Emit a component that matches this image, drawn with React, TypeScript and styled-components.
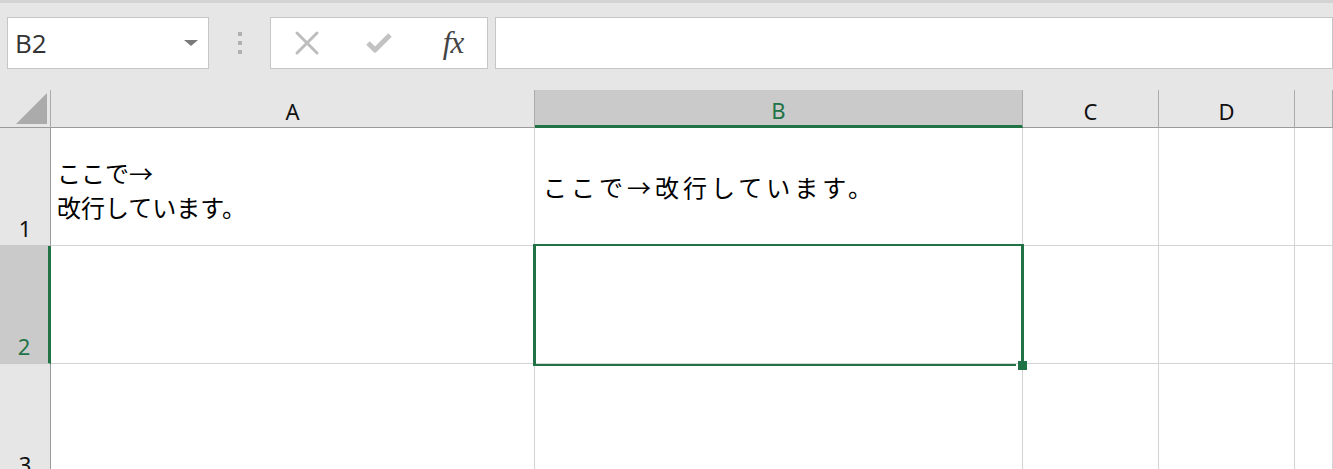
import React from "react";
import styled, { createGlobalStyle } from "styled-components";

const GREEN = "#217346";
const CJK = `"Noto Sans CJK JP", "Noto Sans", sans-serif`;
const UI = `"Noto Sans", "Open Sans", sans-serif`;

const Global = createGlobalStyle`
  html, body { margin: 0; padding: 0; background: #e6e6e6; overflow: hidden; }
  body { width: 1333px; height: 469px; }
  * { box-sizing: border-box; }
`;

const Page = styled.div`
  display: flex;
  flex-direction: column;
  width: 1333px;
  height: 469px;
  overflow: hidden;
  background: #e6e6e6;
  & > * { flex: none; }
`;

const TopStrip = styled.div`
  height: 3px;
  background: #d4d4d4;
`;

const FormulaBar = styled.div`
  display: flex;
  align-items: center;
  height: 87px;
  padding: 14px 0 21px 7px;
`;

const Box = styled.div<{ $w?: number }>`
  display: flex;
  align-items: center;
  height: 52px;
  background: #fff;
  border: 1px solid #c6c6c6;
  ${(p) => (p.$w ? `width: ${p.$w}px; flex: none;` : "flex: 1;")}
`;

const NameText = styled.span`
  flex: 1;
  padding-left: 7px;
  font-family: "Segoe UI", "Open Sans", sans-serif;
  font-size: 26px;
  color: #333;
`;

const Caret = styled.span`
  width: 0;
  height: 0;
  margin-right: 10px;
  border-left: 7px solid transparent;
  border-right: 7px solid transparent;
  border-top: 6px solid #7a7a7a;
`;

const Grip = styled.div`
  display: flex;
  flex-direction: column;
  gap: 5px;
  width: 61px;
  align-items: center;
  flex: none;
`;

const GripDot = styled.span`
  width: 4px;
  height: 4px;
  background: #b0b0b0;
`;

const ActionIcon = styled.span`
  display: flex;
  align-items: center;
  justify-content: center;
  width: 72px;
`;

const FxText = styled.span`
  font-family: "Liberation Serif", "DejaVu Serif", serif;
  font-style: italic;
  font-size: 31px;
  color: #444;
  letter-spacing: -1px;
  margin-left: 4px;
`;

const Gap = styled.div`
  width: 7px;
  flex: none;
`;

const Sheet = styled.div`
  display: grid;
  grid-template-columns: 51px 484px 488px 136px 136px 1fr;
  grid-template-rows: 38px 118px 118px 118px;
`;

const Corner = styled.div`
  background: #e6e6e6;
  border-right: 1px solid #ababab;
  border-bottom: 1px solid #9b9b9b;
  display: flex;
  align-items: flex-end;
  justify-content: flex-end;
  padding: 0 3px 3px 0;
`;

const ColHead = styled.div<{ $active?: boolean }>`
  display: flex;
  align-items: center;
  justify-content: center;
  padding-top: 4px;
  background: ${(p) => (p.$active ? "#cacaca" : "#e6e6e6")};
  border-right: 1px solid #ababab;
  border-bottom: ${(p) => (p.$active ? `3px solid ${GREEN}` : "1px solid #9b9b9b")};
  font-family: ${UI};
  font-size: 22px;
  color: ${(p) => (p.$active ? GREEN : "#111")};
`;

const RowHead = styled.div<{ $active?: boolean }>`
  display: flex;
  align-items: flex-end;
  justify-content: center;
  padding-bottom: 2px;
  background: ${(p) => (p.$active ? "#cacaca" : "#e6e6e6")};
  border-right: ${(p) => (p.$active ? `3px solid ${GREEN}` : "1px solid #9b9b9b")};
  border-bottom: 1px solid #c8c8c8;
  font-family: ${UI};
  font-size: 22px;
  line-height: 30px;
  color: ${(p) => (p.$active ? GREEN : "#111")};
`;

const Cell = styled.div<{ $pad?: number; $shift?: number }>`
  position: relative;
  display: flex;
  align-items: center;
  background: #fff;
  border-right: 1px solid #d4d4d4;
  border-bottom: 1px solid #d4d4d4;
  padding-left: ${(p) => p.$pad ?? 5}px;
  padding-top: ${(p) => p.$shift ?? 0}px;
`;

const CellText = styled.div<{ $spacing?: number }>`
  font-family: ${CJK};
  font-size: 24px;
  line-height: 34px;
  color: #000;
  white-space: pre;
  letter-spacing: ${(p) => p.$spacing ?? 0}px;
`;

/* Active-cell frame drawn over the selected cell and its neighbours' gridlines */
const Selection = styled.div`
  position: absolute;
  z-index: 2;
  top: -2px;
  left: -2px;
  width: 491px;
  height: 122px;
  border: 2px solid ${GREEN};
  border-left-width: 3px;
  border-right-width: 3px;
  pointer-events: none;
`;

const FillHandle = styled.div`
  position: absolute;
  right: -6px;
  bottom: -6px;
  width: 9px;
  height: 9px;
  background: ${GREEN};
`;

const HandleGap = styled.div`
  position: absolute;
  right: 3px;
  bottom: -2px;
  width: 2px;
  height: 2px;
  background: #fff;
`;

const cols = ["A", "B", "C", "D", "E"];

export default function App() {
  return (
    <Page>
      <Global />
      <TopStrip />
      <FormulaBar>
        <Box $w={202}>
          <NameText>B2</NameText>
          <Caret />
        </Box>
        <Grip>
          <GripDot />
          <GripDot />
          <GripDot />
        </Grip>
        <Box $w={218}>
          <ActionIcon>
            <svg width="26" height="26" viewBox="0 0 26 26">
              <path d="M3 3 L23 23 M23 3 L3 23" stroke="#bdbdbd" strokeWidth="3" strokeLinecap="round" fill="none" />
            </svg>
          </ActionIcon>
          <ActionIcon>
            <svg width="28" height="24" viewBox="0 0 28 24">
              <path d="M3 12 L10 19 L25 4" stroke="#c2c2c2" strokeWidth="5" strokeLinejoin="round" fill="none" />
            </svg>
          </ActionIcon>
          <ActionIcon>
            <FxText>fx</FxText>
          </ActionIcon>
        </Box>
        <Gap />
        <Box />
      </FormulaBar>
      <Sheet>
        <Corner>
          <svg width="31" height="31" viewBox="0 0 31 31">
            <polygon points="31,0 31,31 0,31" fill="#ababab" />
          </svg>
        </Corner>
        {cols.map((c) => (
          <ColHead key={c} $active={c === "B"}>
            {c === "E" ? "" : c}
          </ColHead>
        ))}

        <RowHead>1</RowHead>
        <Cell $pad={6} $shift={6}>
          <CellText>{"ここで→\n改行しています。"}</CellText>
        </Cell>
        <Cell $pad={8}>
          <CellText $spacing={4}>ここで→改行しています。</CellText>
        </Cell>
        <Cell />
        <Cell />
        <Cell />

        <RowHead $active>2</RowHead>
        <Cell />
        <Cell>
          <Selection>
            <HandleGap />
            <FillHandle />
          </Selection>
        </Cell>
        <Cell />
        <Cell />
        <Cell />

        <RowHead>3</RowHead>
        <Cell />
        <Cell />
        <Cell />
        <Cell />
        <Cell />
      </Sheet>
    </Page>
  );
}
